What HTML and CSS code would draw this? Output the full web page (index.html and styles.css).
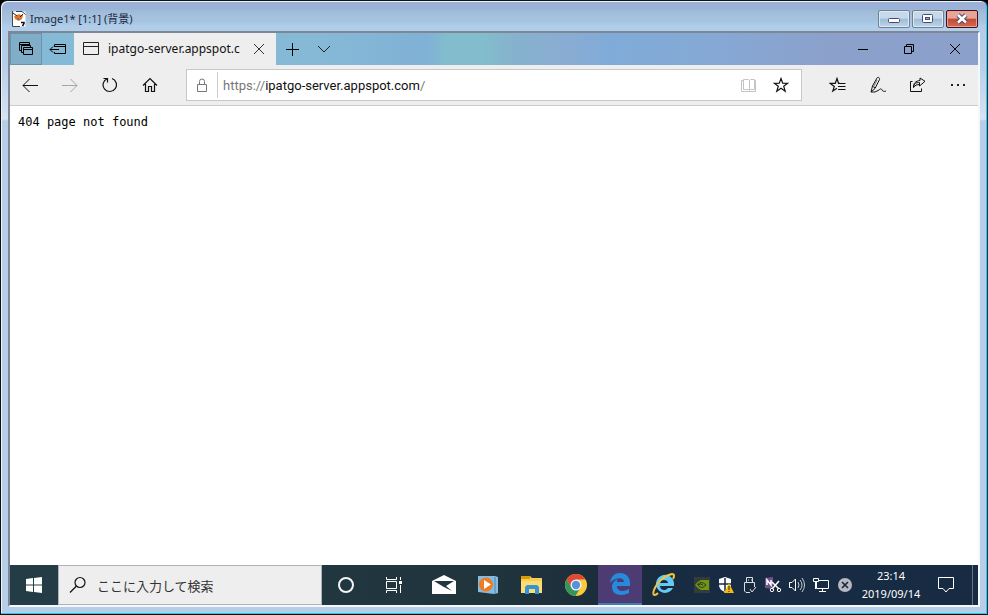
FILE: index.html
```
<!DOCTYPE html>
<html lang="ja">
<head>
<meta charset="utf-8">
<title>Image1</title>
<link rel="stylesheet" href="styles.css">
</head>
<body>
<div class="window">
  <header class="titlebar">
    <svg class="app-icon" width="14" height="16" viewBox="0 0 14 16"><path d="M.5.5h13v15H.5z" fill="#fff"/><path d="M.5 0v15.500H8M4 .5h6l3.500 3" fill="none" stroke="#444"/><path d="M9 11.500h3v1L10.500 15" fill="none" stroke="#111" stroke-width="1.500"/><path d="M2 5l3-1 2-1 2 1 2 0-1 4-3 2-4-2z" fill="#e87522"/><path d="M1 2l4 3M8 6l3-3" stroke="#222"/><path d="M5 7h2v2H5z" fill="#4b72bc"/></svg>
    <h1 class="title">Image1* [1:1] (背景)</h1>
    <div class="captions">
      <button class="caption" aria-label="最小化"><svg width="12" height="12" viewBox="0 0 12 12"><rect x=".5" y="5.500" width="11" height="4" rx="1" fill="#fff" stroke="#4b4872"/></svg></button>
      <button class="caption" aria-label="最大化"><svg width="12" height="12" viewBox="0 0 12 12"><rect x=".5" y="1.500" width="10" height="8" rx="1" fill="#fff" stroke="#4b4872"/><rect x="3.500" y="4.500" width="4" height="2" fill="#8fb2d5" stroke="#4b4872"/></svg></button>
      <button class="caption caption-close" aria-label="閉じる"><svg width="12" height="12" viewBox="0 0 12 12"><path d="M2 2l8 7.500M10 2L2 9.500" stroke="#4b4872" stroke-width="4.500"/><path d="M2 2l8 7.500M10 2L2 9.500" stroke="#fff" stroke-width="2.500"/></svg></button>
    </div>
  </header>
  <main class="screen">
    <div class="tabstrip">
      <button class="aside aside-first" aria-label="保存したタブ"><svg width="16" height="16" viewBox="0 0 16 16"><path d="M3 9.500H1.500v-8h10V4M1.500 3.500h10M5 11.500H3.500v-7h9V6" fill="none" stroke="#000"/><path d="M5.500 6.500h9v7h-9zM5.500 8.500h9" fill="none" stroke="#000"/></svg></button>
      <button class="aside" aria-label="タブを保存"><svg width="18" height="16" viewBox="0 0 18 16"><path d="M5.500 6V3.500h11v9h-11V11M5.500 5.500h11M1 8.500h9M4 5.500l-3 3 3 3" fill="none" stroke="#000"/></svg></button>
      <div class="tab">
        <svg width="16" height="14" viewBox="0 0 16 14"><path d="M.5.5h15v12H.5zM.5 4.500h15" fill="none" stroke="#222"/></svg>
        <span class="tab-name">ipatgo-server.appspot.c</span>
        <button class="plain" aria-label="タブを閉じる"><svg width="12" height="12" viewBox="0 0 12 12"><path d="M1 1l10 10M11 1L1 11" stroke="#333"/></svg></button>
      </div>
      <button class="plain tab-action" aria-label="新しいタブ"><svg width="14" height="14" viewBox="0 0 14 14"><path d="M7.500 1v13M1 7.500h13" stroke="#000"/></svg></button>
      <button class="plain tab-action" aria-label="タブのプレビュー"><svg width="14" height="14" viewBox="0 0 14 14"><path d="M1 4l6 6 6-6" fill="none" stroke="#222"/></svg></button>
      <div class="edge-captions">
        <button class="plain" aria-label="最小化"><svg width="12" height="12" viewBox="0 0 12 12"><path d="M1 6.500h10" stroke="#000"/></svg></button>
        <button class="plain" aria-label="元に戻す"><svg width="12" height="12" viewBox="0 0 12 12"><path d="M1.500 3.500h7v7h-7zM3.500 3V1.500h7v7H9" fill="none" stroke="#000"/></svg></button>
        <button class="plain" aria-label="閉じる"><svg width="12" height="12" viewBox="0 0 12 12"><path d="M1 1l10 10M11 1L1 11" stroke="#000"/></svg></button>
      </div>
    </div>
    <nav class="toolbar">
      <div class="tools">
        <button class="plain" aria-label="戻る"><svg width="16" height="16" viewBox="0 0 16 16"><path d="M1 8.500h15M7.500 2L1 8.500 7.500 15" fill="none" stroke="#111"/></svg></button>
        <button class="plain" aria-label="進む" disabled><svg width="16" height="16" viewBox="0 0 16 16"><path d="M0 8.500h15M8.500 2L15 8.500 8.500 15" fill="none" stroke="#a5a5ad"/></svg></button>
        <button class="plain" aria-label="更新"><svg width="16" height="16" viewBox="0 0 16 16"><path d="M5 1.700A6.700 6.700 0 1 0 10 1.500M1.500 1.500h4v4" fill="none" stroke="#111" stroke-width="1.200"/></svg></button>
        <button class="plain" aria-label="ホーム"><svg width="16" height="16" viewBox="0 0 16 16"><path d="M1 8.500l7-7 7 7M3.500 7v7.500h3v-5h3v5h3V7" fill="none" stroke="#111" stroke-width="1.200"/></svg></button>
      </div>
      <div class="address">
        <svg class="lock" width="12" height="14" viewBox="0 0 12 14"><path d="M1.500 6.500h9v7h-9zM3.500 6V3.500a2.500 2.500 0 0 1 5 0V6" fill="none" stroke="#777"/></svg>
        <div class="url"><span>https://</span><input class="url-input" type="text" aria-label="アドレス" value="ipatgo-server.appspot.com"><span>/</span></div>
        <button class="plain" aria-label="読み取りビュー" disabled><svg width="16" height="16" viewBox="0 0 16 16"><path d="M8.500 3v10M2.500 2.500h5l1 1 1-1h4v10h-4l-1 1-1-1h-5zM2 3.500H.5v11h14v-11H14" fill="none" stroke="#c4c4c4"/></svg></button>
        <button class="plain" aria-label="お気に入りに追加"><svg width="16" height="16" viewBox="0 0 16 16"><path d="M8 1.500l1.700 4.700 5 .1-4 3 1.500 4.900L8 11.300l-4.200 2.900 1.500-4.900-4-3 5-.1z" fill="none" stroke="#111" stroke-width="1.200"/></svg></button>
      </div>
      <div class="tools">
        <button class="plain" aria-label="ハブ"><svg width="18" height="16" viewBox="0 0 18 16"><path d="M11 6.300H9.500L8 1.500 6.300 6.300l-5 .1 4 3L3.800 14 8 11.300M9 9.500h7.500M9 12.500h7.500M11 6.500h5.500" fill="none" stroke="#111" stroke-width="1.200"/></svg></button>
        <button class="plain" aria-label="ノートの追加"><svg width="18" height="18" viewBox="0 0 18 18"><path d="M2 16l1.500-6L8 2c1.500-1.500 3 0 2.500 1.500L6 12.500 2 16h4l4-2c2-2 2.500-1 3 0s2 2 4 1M3.500 10l2.500 2" fill="none" stroke="#111"/><path d="M8 4l-3.500 7" stroke="#777"/></svg></button>
        <button class="plain" aria-label="共有"><svg width="16" height="16" viewBox="0 0 16 16"><path d="M2.500 4.500h-2v10h11v-3M3.500 10.500c.2-4 2.500-5 6-5V9l5.500-4.700L10 1v2.500C5.500 4 3.500 6 3.500 10.500L6 8l3.500-.5" fill="none" stroke="#111"/></svg></button>
        <button class="plain" aria-label="設定など"><svg width="16" height="16" viewBox="0 0 16 16"><path d="M1 7h2v2H1zM7 7h2v2H7zM13 7h2v2h-2z" fill="#222"/></svg></button>
      </div>
    </nav>
    <pre class="page">404 page not found</pre>
    <footer class="taskbar">
      <button class="start" aria-label="スタート"><svg width="16" height="16" viewBox="0 0 16 16"><path d="M0 2l7-1v6.500H0zM8 1l8-1v7.500H8zM0 8.500h7V15l-7-1zM8 8.500h8V16l-8-1z" fill="#fff"/></svg></button>
      <label class="search"><svg width="18" height="18" viewBox="0 0 18 18"><circle cx="11" cy="6.500" r="5" fill="none" stroke="#111" stroke-width="1.200"/><path d="M7.500 10L1 16.500" stroke="#111" stroke-width="1.300"/></svg><input class="search-input" type="text" aria-label="検索" placeholder="ここに入力して検索"></label>
      <div class="system">
        <button class="plain" aria-label="Cortana"><svg width="18" height="18" viewBox="0 0 18 18"><circle cx="9" cy="9" r="7" fill="none" stroke="#f4f4f4" stroke-width="2"/></svg></button>
        <button class="plain" aria-label="タスク ビュー"><svg width="18" height="18" viewBox="0 0 18 18"><path d="M1.500 1v2.500h10V1M1.500 17v-2.500h10V17M1.500 5.500h10v7h-10zM15.500 1v3M15.500 9v8" fill="none" stroke="#fff"/><path d="M14 5h3v3h-3z" fill="#fff"/></svg></button>
      </div>
      <div class="apps">
        <button class="plain" aria-label="メール"><svg width="24" height="20" viewBox="0 0 24 20"><path d="M0 6l12-6 12 6v13H0z" fill="#fff"/><path d="M2 6h20l-8 5 6 5-9-4.500z" fill="#20353d"/></svg></button>
        <button class="plain" aria-label="メディア プレーヤー"><svg width="20" height="20" viewBox="0 0 20 20"><path d="M0 1h17l3 1v16l-4 1-16-2z" fill="#83bce0"/><path d="M17 2v16" stroke="#4289bc"/><circle cx="8" cy="9.500" r="7" fill="#ef7c20"/><path d="M6 5l7 4.500L6 14z" fill="#fff"/></svg></button>
        <button class="plain" aria-label="エクスプローラー"><svg width="22" height="20" viewBox="0 0 22 20"><path d="M0 1h9l2 2h10v15H0z" fill="#f7ce55"/><path d="M0 1h9v3H0z" fill="#d99a08"/><path d="M0 6h21v12H0z" fill="#ffdc70"/><path d="M4 19v-7l2-2h10l2 2v7h-4v-5H8v5z" fill="#3494d8"/></svg></button>
        <button class="plain" aria-label="Chrome"><svg width="22" height="22" viewBox="0 0 22 22"><circle cx="11" cy="11" r="11" fill="#fbcb3b"/><path d="M1.500 5.500A11 11 0 0 1 20.500 5.500H11L6.500 14z" fill="#df4935"/><path d="M1.500 5.500A11 11 0 0 0 10.500 22l5-8.500-9 0z" fill="#33945c"/><circle cx="11" cy="11" r="5.500" fill="#f5f7fa"/><circle cx="11" cy="11" r="4.200" fill="#5593de"/></svg></button>
        <button class="plain active" aria-label="Edge"><svg width="22" height="22" viewBox="0 0 22 22"><path d="M1 10C2 3 6 0 11 0c6 0 10 4 10 10v3H8c0 6 7 6 12 3v4c-8 4-17 2-17-6 0-4 3-7 6-8-1 1-1 2-1 3h7c0-5-9-5-14 1z" fill="#278bdc"/></svg></button>
        <button class="plain" aria-label="Internet Explorer"><svg width="24" height="24" viewBox="0 0 24 24"><path d="M21 15A9 9 0 1 1 22 11v2H8c0 5 6 5 8 2zM8 10h8c0-4-8-4-8 0z" fill="#65c9f2" fill-rule="evenodd"/><path d="M6 20c-3 3-6 3-4-3C5 9 13 2 20 1c3 0 2 3 1 5" fill="none" stroke="#f0c544" stroke-width="2"/></svg></button>
      </div>
      <div class="tray">
        <svg width="16" height="16" viewBox="0 0 16 16"><path d="M0 0h16v16H0z" fill="#343b38"/><path d="M1 8q4-5 7-5h7v10H7Q4 12 1 8z" fill="#719514"/><path d="M3 8q4-5 9 0-5 5-8 0 3-2 5 0" fill="none" stroke="#263c22"/></svg>
        <svg width="16" height="18" viewBox="0 0 16 18"><path d="M7 1l6 2v6q0 5-6 7Q1 14 1 9V3z" fill="#fff"/><path d="M7 2v13M1 8h12" stroke="#172b42" stroke-width="1.500"/><path d="M11 7l5 10H6z" fill="#f6b90d"/><path d="M11 10v4M11 15v1" stroke="#222"/></svg>
        <svg width="16" height="18" viewBox="0 0 16 18"><path d="M5.500 6V1.500h6V6M9 16.500H5L3.500 15V6.500h10V11M7 4h1M10 4h1M9 13l2 3 4-5" fill="none" stroke="#ddd"/></svg>
        <svg width="16" height="18" viewBox="0 0 16 18"><path d="M0 2l8-1v12l-8-1z" fill="#74508d"/><path d="M2 9V4l4 5V4M7 6l7 7M14 5l-7 8" fill="none" stroke="#fff" stroke-width="1.500"/><circle cx="7" cy="14" r="1.700" fill="none" stroke="#fff"/><circle cx="14" cy="14" r="1.700" fill="none" stroke="#fff"/></svg>
        <svg width="16" height="16" viewBox="0 0 16 16"><path d="M.5 5.500H3L6.500 2v12L3 10.500H.5z" fill="none" stroke="#fff"/><path d="M9 5q2 3 0 6M11 3q4 5 0 10M13 1q5 7 0 14" fill="none" stroke="#c6ccd3"/></svg>
        <svg width="18" height="16" viewBox="0 0 18 16"><path d="M4.500 3.500h12v8h-12zM10.500 11v3M7 14.500h7" fill="none" stroke="#fff"/><path d="M1.500 1.500h5v3h-5z" fill="#172b42" stroke="#fff"/><path d="M3.500 5v7" stroke="#fff"/></svg>
        <svg width="14" height="14" viewBox="0 0 14 14"><circle cx="7" cy="7" r="7" fill="#b7b8c2"/><path d="M4 4l6 6M10 4l-6 6" stroke="#172b42" stroke-width="1.700"/></svg>
      </div>
      <time class="clock" datetime="2019-09-14T23:14"><span>23:14</span><span>2019/09/14</span></time>
      <button class="plain notice" aria-label="通知"><svg width="16" height="16" viewBox="0 0 16 16"><path d="M.5.5h15v11H11L8 15l-3-3.500H.5z" fill="none" stroke="#fff"/></svg></button>
      <button class="desktop" aria-label="デスクトップの表示"></button>
    </footer>
  </main>
</div>
</body>
</html>
```
FILE: styles.css
```
* { box-sizing: border-box; }
body {
  margin: 0;
  background: #000;
  font-family: "Noto Sans", "Noto Sans CJK JP", sans-serif;
  font-size: 12px;
  color: #111;
}
button, input { font: inherit; color: inherit; border: 0; padding: 0; margin: 0; }
svg { display: block; flex: none; }
.plain { background: none; display: grid; place-items: center; }

.window {
  height: 100vh;
  display: flex;
  flex-direction: column;
  padding: 0 7px 7px;
  border: 1px solid #111;
  border-right-color: #18384d;
  border-radius: 7px 7px 0 0;
  background: linear-gradient(#9bb1d7 0, #9bb1d7 8px, #9bbbd9 9px, #a5bfdc 14px, #a5c4df 20px, #b0cdea 25px, #b8cfe9 65px, #d8e2f2 118px, #b6cee8 120px);
  box-shadow: inset -1px -1px #24cdec, inset 1px 1px #e9f4ff;
}
.titlebar { height: 30px; flex: none; display: flex; align-items: center; padding: 6px 0 0 4px; }
.title {
  flex: 1;
  margin: 0 0 0 4px;
  font-size: 11px;
  line-height: 18px;
  font-weight: 400;
  color: #1b2840;
}
.captions { display: flex; gap: 2px; padding-right: 2px; }
.caption {
  width: 32px;
  height: 18px;
  display: grid;
  place-items: center;
  border: 1px solid #717f93;
  border-radius: 2px;
  background: linear-gradient(#c5d9eb 0 45%, #9fbcd6 50%, #bbd6eb);
  box-shadow: inset 0 0 0 1px #dbe9f4;
}
.caption-close {
  border-color: #45101c;
  background: linear-gradient(#e7a597 0 45%, #c14a35 50%, #d56b50);
  box-shadow: inset 0 0 0 1px #ea9f90;
}

.screen {
  flex: 1;
  min-height: 0;
  display: flex;
  flex-direction: column;
  border: 2px solid #7f8794;
  border-right-color: #f4f7fb;
  border-bottom-color: #f4f7fb;
  background: #fff;
}
.tabstrip {
  height: 32px;
  flex: none;
  display: flex;
  background: linear-gradient(90deg, #82b5d0 0, #86b9d6 32%, #80b1d6 43%, #82bccd 45%, #82bccd 49%, #86b2cd 52%, #8aacd2 57%, #80abd8 62%, #85a9d5 72%, #8ba1cc 84%, #8ba1cc 100%);
}
.aside { width: 32px; display: grid; place-items: center; background: #85bad6; }
.aside-first { background: #80adc7; border: 1px solid #6b92ab; }
.tab {
  width: 202px;
  display: flex;
  align-items: center;
  gap: 9px;
  padding: 0 11px 0 9px;
  background: #eee;
}
.tab-name { flex: 1; white-space: nowrap; line-height: 20px; }
.tab-action { width: 32px; }
.edge-captions { margin-left: auto; display: flex; }
.edge-captions .plain { width: 46px; }

.toolbar {
  height: 41px;
  flex: none;
  display: flex;
  align-items: center;
  background: #eee;
  border-bottom: 1px solid #ccc;
}
.tools { display: flex; }
.tools .plain { width: 40px; height: 32px; }
.address {
  flex: 1;
  height: 32px;
  margin: 0 16px;
  display: flex;
  align-items: center;
  background: #fff;
  border: 1px solid #c8c8c8;
}
.address .plain { width: 32px; height: 30px; }
.address .plain:last-child { margin-right: 4px; }
.lock { margin: 0 9px; }
.url {
  flex: 1;
  display: flex;
  align-items: center;
  height: 26px;
  padding-left: 5px;
  border-left: 1px solid #ccc;
  font-family: Roboto, sans-serif;
  font-size: 13px;
  color: #777;
}
.url-input { field-sizing: content; background: none; color: #111; outline: 0; }

.page {
  flex: 1;
  min-height: 0;
  margin: 0;
  padding: 8px;
  background: #fff;
  color: #000;
  font: 12px/16px "DejaVu Sans Mono", monospace;
}

.taskbar {
  height: 40px;
  flex: none;
  display: flex;
  background: linear-gradient(90deg, #233c45 0, #20343c 50%, #1b2d3c 62%, #172b42 72%);
  color: #fff;
}
.start { width: 48px; display: grid; place-items: center; background: #233c45; }
.search {
  width: 264px;
  display: flex;
  align-items: center;
  gap: 10px;
  padding: 0 10px;
  background: #eee;
  border: 1px solid #b2b2bd;
}
.search-input {
  flex: 1;
  min-width: 0;
  background: none;
  font-family: "Noto Sans CJK JP", sans-serif;
  font-size: 13px;
  outline: 0;
}
.search-input::placeholder { color: #333; opacity: 1; }
.system { display: flex; }
.system .plain { width: 48px; }
.apps { display: flex; padding-left: 4px; }
.apps .plain { width: 44px; }
.apps .active { background: #4c3c73; border-bottom: 2px solid #3e7eae; }
.tray { flex: 1; display: flex; align-items: center; justify-content: space-between; padding: 0 10px 0 8px; }
.clock { width: 58px; display: flex; flex-direction: column; align-items: center; justify-content: center; font-size: 11px; line-height: 18px; white-space: nowrap; }
.notice { width: 52px; }
.desktop { width: 6px; background: none; border-left: 1px solid #667486; }
```
